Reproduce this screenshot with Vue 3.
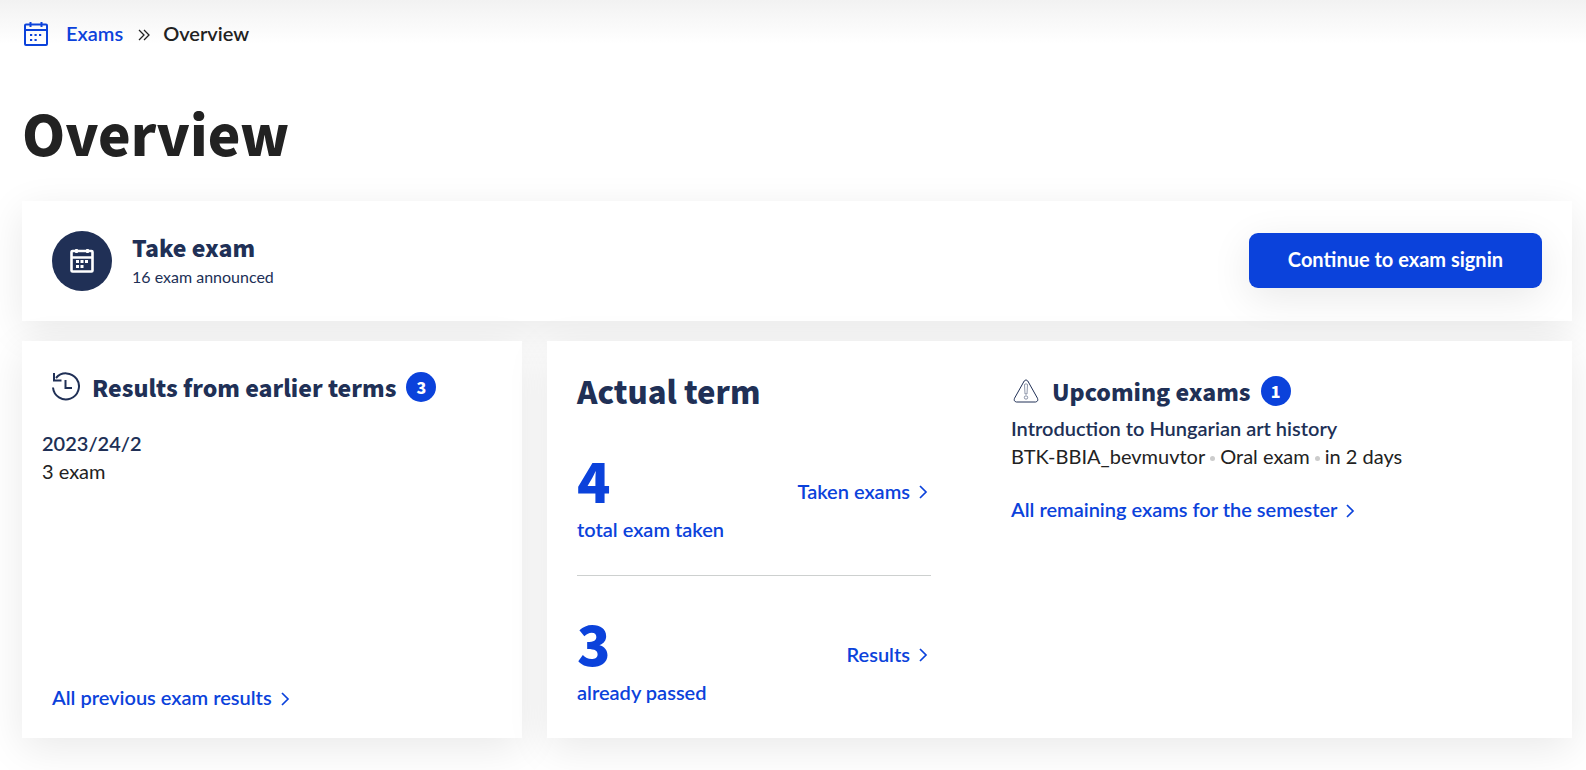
<script setup>
const stats = [
  { value: 4, label: 'total exam taken', link: 'Taken exams' },
  { value: 3, label: 'already passed', link: 'Results' },
]
const details = ['BTK-BBIA_bevmuvtor', 'Oral exam', 'in 2 days']
</script>

<template>
  <div class="page">
    <nav class="crumbs" aria-label="Breadcrumb">
      <svg class="cal" viewBox="0 0 24 24" aria-hidden="true">
        <path d="M2 2.500h20q1 0 1 1v18.500q0 1-1 1H2q-1 0-1-1V3.500q0-1 1-1zM1 8h22M6.500 0v5M17.500 0v5" />
        <path class="dots" d="M10.500 12h2.200v2h-2.200zM6 12h2.200v2H6zM15 12h2.200v2H15zM6 17h2.200v2H6zM10.500 17h2.200v2h-2.200z" />
      </svg>
      <a href="#">Exams</a>
      <svg class="sep" viewBox="0 0 12 12" aria-hidden="true"><path d="M1 1l5 5-5 5M6 1l5 5-5 5" /></svg>
      <span>Overview</span>
    </nav>

    <h1>Overview</h1>

    <section class="card take">
      <span class="disc">
        <svg class="cal" viewBox="0 0 24 24" aria-hidden="true">
          <path d="M2.500 2h19q1 0 1 1v18.500q0 1-1 1h-19q-1 0-1-1V3q0-1 1-1zM1.500 8.500h21M6.500 0v4M17.500 0v4" />
          <path class="dots" d="M10.500 11h3v3h-3zM6 11h3v3H6zM15 11h3v3h-3zM6 16h3v3H6zM10.500 16h3v3h-3z" />
        </svg>
      </span>
      <div class="take-text">
        <h2>Take exam</h2>
        <p>16 exam announced</p>
      </div>
      <button type="button">Continue to exam signin</button>
    </section>

    <div class="columns">
      <section class="card earlier">
        <header class="heading">
          <svg class="history" viewBox="0 0 28 30" aria-hidden="true">
            <path d="M1 15.500a13 13 0 1 0 3-9.500M2 1v7.500h7.500M13.500 8v8h6.500" />
          </svg>
          <h2>Results from earlier terms</h2>
          <span class="badge">3</span>
        </header>
        <div class="term">
          <strong>2023/24/2</strong>
          <span>3 exam</span>
        </div>
        <a class="more" href="#">All previous exam results
          <svg class="chev" viewBox="0 0 9 14" aria-hidden="true"><path d="M1 1l6 6-6 6" /></svg>
        </a>
      </section>

      <section class="card actual">
        <div class="stats">
          <h2 class="large">Actual term</h2>
          <div v-for="s in stats" :key="s.label" class="stat">
            <div>
              <strong>{{ s.value }}</strong>
              <span>{{ s.label }}</span>
            </div>
            <a class="more" href="#">{{ s.link }}
              <svg class="chev" viewBox="0 0 9 14" aria-hidden="true"><path d="M1 1l6 6-6 6" /></svg>
            </a>
          </div>
        </div>
        <div class="upcoming">
          <header class="heading">
            <svg class="warn" viewBox="0 0 26 24" aria-hidden="true">
              <path d="M11.200 2q1.800-2.400 3.600 0l9.700 17.300q1.100 3.200-2 3.700H3.500q-3.100-.5-2-3.700z" />
              <path class="thin" d="M11.500 5.500q1.500-1.500 3 0l-.5 9.500h-2z" />
              <circle class="thin" cx="13" cy="18.500" r="1.700" />
            </svg>
            <h2>Upcoming exams</h2>
            <span class="badge">1</span>
          </header>
          <strong class="subject">Introduction to Hungarian art history</strong>
          <ul>
            <li v-for="d in details" :key="d">{{ d }}</li>
          </ul>
          <a class="more" href="#">All remaining exams for the semester
            <svg class="chev" viewBox="0 0 9 14" aria-hidden="true"><path d="M1 1l6 6-6 6" /></svg>
          </a>
        </div>
      </section>
    </div>
  </div>
</template>

<style>
body {
  background: #fff;
}
</style>

<style scoped>
.page {
  box-sizing: border-box;
  min-height: 100vh;
  padding: 19px 14px 31px 22px;
  background: linear-gradient(#f2f2f2, #fff 44px);
  color: #222;
  font: 400 20px/28px Lato, Carlito, sans-serif;
}
h1, h2, p, ul {
  margin: 0;
  padding: 0;
}
h1, h2, .badge, .stat strong {
  font-family: "Noto Sans CJK SC", sans-serif;
  font-weight: 900;
}
svg {
  flex: none;
  fill: none;
  stroke: currentColor;
}
a {
  color: #0b42db;
  font-weight: 600;
  text-decoration: none;
}
.crumbs {
  display: flex;
  align-items: center;
  font-weight: 600;
}
.crumbs .sep {
  width: 12px;
  height: 12px;
  margin: 3px 13px 0 15px;
  stroke-width: 1.3;
}
.cal {
  width: 24px;
  height: 24px;
  stroke-width: 2;
}
.cal .dots {
  fill: currentColor;
  stroke: none;
}
.crumbs .cal {
  margin: 2px 18px 0 2px;
  color: #0b42db;
}
h1 {
  margin: 45px 0 29px;
  font-size: 55px;
  line-height: 80px;
}
.card {
  box-sizing: border-box;
  background: #fff;
  box-shadow: 0 10px 40px rgba(0, 0, 0, 0.09);
}
.take {
  display: flex;
  align-items: center;
  gap: 20px;
  min-height: 120px;
  padding: 30px;
  color: #203056;
}
.disc {
  display: grid;
  place-items: center;
  width: 60px;
  height: 60px;
  border-radius: 50%;
  background: #203056;
  color: #fff;
}
.disc .cal {
  stroke-width: 2.6;
}
.take-text {
  flex: 1;
}
h2 {
  color: #203056;
  font-size: 23px;
  line-height: 32px;
}
.take p {
  font-size: 16px;
}
button {
  margin-bottom: 2px;
  padding: 12px 39px 15px;
  border: 0;
  border-radius: 9px;
  background: #0b42db;
  box-shadow: 0 10px 40px rgba(0, 0, 0, 0.09);
  color: #fff;
  font: 700 20px/28px Lato, Carlito, sans-serif;
}
.columns {
  display: grid;
  grid-template-columns: 500fr 1025fr;
  gap: 25px;
  margin-top: 20px;
}
.heading {
  display: flex;
  align-items: center;
}
.badge {
  width: 30px;
  height: 30px;
  margin-left: 10px;
  border-radius: 50%;
  background: #0b42db;
  color: #fff;
  font-size: 16px;
  line-height: 30px;
  text-align: center;
}
.earlier {
  display: flex;
  flex-direction: column;
  padding: 30px 30px 27px;
}
.history {
  width: 28px;
  height: 30px;
  margin-right: 12px;
  stroke: #203056;
  stroke-width: 2;
}
.term {
  display: grid;
  flex: 1;
  align-content: start;
  margin: 26px 0 0 -10px;
}
.term strong, .subject {
  color: #203056;
  font-weight: 600;
}
.more {
  display: flex;
  align-items: center;
  gap: 9px;
}
.chev {
  width: 9px;
  height: 14px;
  margin-top: 3px;
  stroke-width: 1.7;
}
.actual {
  display: grid;
  grid-template-columns: 2fr 3fr;
  gap: 80px;
  padding: 30px 30px 0;
}
.large {
  font-size: 31px;
  line-height: 40px;
}
.stat {
  display: flex;
  align-items: center;
  justify-content: space-between;
  padding: 32px 3px 32px 0;
  color: #0b42db;
  font-weight: 600;
}
.stat + .stat {
  padding-top: 30px;
  border-top: 1px solid #cdd0cf;
}
.stat div {
  display: grid;
}
.stat strong {
  font-size: 55px;
  line-height: 72px;
}
.stat .more {
  padding-bottom: 5px;
}
.warn {
  width: 26px;
  height: 24px;
  margin: 0 13px 0 2px;
  stroke: #203056;
}
.warn .thin {
  stroke-width: 0.5;
}
.upcoming {
  padding-top: 4px;
}
.subject {
  display: block;
  margin-top: 7px;
}
ul {
  display: flex;
  list-style: none;
}
li + li::before {
  content: "";
  display: inline-block;
  width: 5px;
  height: 5px;
  margin: 0 5px 3px;
  border-radius: 50%;
  background: #ccc;
}
.upcoming .more {
  margin-top: 25px;
}
</style>
